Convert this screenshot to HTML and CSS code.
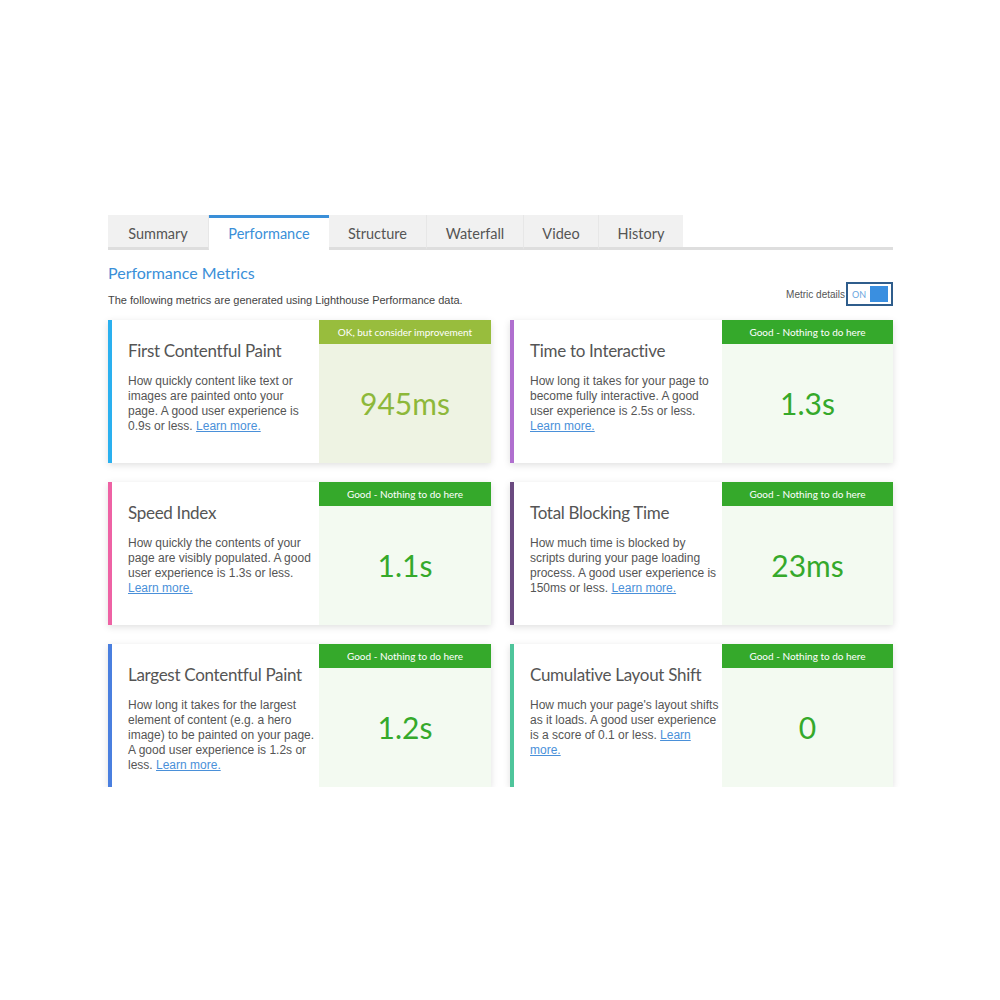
FILE: index.html
```html
<!DOCTYPE html>
<html>
<head>
<meta charset="utf-8">
<link rel="stylesheet" href="styles.css">
</head>
<body>
<div class="page">
  <nav class="tabs">
    <div class="tab t-summary">Summary</div>
    <div class="tab active t-perf">Performance</div>
    <div class="tab t-struct">Structure</div>
    <div class="tab t-water">Waterfall</div>
    <div class="tab t-video">Video</div>
    <div class="tab t-hist">History</div>
  </nav>
  <div class="head">
    <div class="head-text">
      <h2 class="heading">Performance Metrics</h2>
      <p class="sub">The following metrics are generated using Lighthouse Performance data.</p>
    </div>
    <div class="details">
      <span class="details-label">Metric details</span>
      <span class="toggle"><span class="toggle-on">ON</span><span class="toggle-knob"></span></span>
    </div>
  </div>
  <div class="grid">
    <div class="card c-fcp">
      <div class="info">
        <h3 class="title">First Contentful Paint</h3>
        <p class="desc">How quickly content like text or images are painted onto your page. A good user experience is 0.9s or less. <a href="#">Learn more.</a></p>
      </div>
      <div class="panel ok">
        <div class="badge">OK, but consider improvement</div>
        <div class="value">945ms</div>
      </div>
    </div>
    <div class="card c-tti">
      <div class="info">
        <h3 class="title">Time to Interactive</h3>
        <p class="desc">How long it takes for your page to become fully interactive. A good user experience is 2.5s or less. <a href="#">Learn more.</a></p>
      </div>
      <div class="panel good">
        <div class="badge">Good - Nothing to do here</div>
        <div class="value">1.3s</div>
      </div>
    </div>
    <div class="card c-si">
      <div class="info">
        <h3 class="title">Speed Index</h3>
        <p class="desc">How quickly the contents of your page are visibly populated. A good user experience is 1.3s or less. <a href="#">Learn more.</a></p>
      </div>
      <div class="panel good">
        <div class="badge">Good - Nothing to do here</div>
        <div class="value">1.1s</div>
      </div>
    </div>
    <div class="card c-tbt">
      <div class="info">
        <h3 class="title">Total Blocking Time</h3>
        <p class="desc">How much time is blocked by scripts during your page loading process. A good user experience is 150ms or less. <a href="#">Learn more.</a></p>
      </div>
      <div class="panel good">
        <div class="badge">Good - Nothing to do here</div>
        <div class="value">23ms</div>
      </div>
    </div>
    <div class="card c-lcp">
      <div class="info">
        <h3 class="title">Largest Contentful Paint</h3>
        <p class="desc">How long it takes for the largest element of content (e.g. a hero image) to be painted on your page. A good user experience is 1.2s or less. <a href="#">Learn more.</a></p>
      </div>
      <div class="panel good">
        <div class="badge">Good - Nothing to do here</div>
        <div class="value">1.2s</div>
      </div>
    </div>
    <div class="card c-cls">
      <div class="info">
        <h3 class="title">Cumulative Layout Shift</h3>
        <p class="desc">How much your page's layout shifts as it loads. A good user experience is a score of 0.1 or less. <a href="#">Learn more.</a></p>
      </div>
      <div class="panel good">
        <div class="badge">Good - Nothing to do here</div>
        <div class="value">0</div>
      </div>
    </div>
  </div>
</div>
</body>
</html>
```

FILE: styles.css
```css
html, body {
  margin: 0;
  padding: 0;
  background: #ffffff;
}
body {
  font-family: Lato, "Open Sans", "Liberation Sans", sans-serif;
  color: #555;
}
.page {
  width: 785px;
  margin: 0 0 0 108px;
  padding-top: 215px;
}
.tabs {
  display: flex;
  height: 35px;
  border-bottom: 3px solid #dedede;
  box-sizing: border-box;
}
.tab {
  box-sizing: border-box;
  height: 35px;
  margin-bottom: -3px;
  padding-top: 10px;
  background: #f1f1f1;
  border-bottom: 3px solid #dedede;
  border-right: 1px solid #e7e7e7;
  text-align: center;
  font-size: 14.5px;
  color: #555;
}
.t-summary { width: 101px; }
.t-perf { width: 120px; }
.t-struct { width: 98px; }
.t-water { width: 97px; }
.t-video { width: 75px; }
.t-hist { width: 84px; border-right: none; }
.tab.active {
  background: #ffffff;
  color: #3a8fd8;
  border-top: 3px solid #3a8fd8;
  border-bottom: 3px solid #ffffff;
  padding-top: 7px;
  height: 38px;
  border-right: none;
}
.head {
  display: flex;
  justify-content: space-between;
  align-items: flex-end;
  padding-bottom: 13px;
}
.heading {
  margin: 12px 0 0 0;
  font-size: 16px;
  font-weight: 400;
  color: #3a8fd8;
  line-height: 22px;
}
.sub {
  margin: 10px 0 0 0;
  font-family: "Liberation Sans", Arial, sans-serif;
  font-size: 11px;
  line-height: 13px;
  color: #444;
}
.details {
  display: flex;
  align-items: center;
  margin-bottom: 1px;
}
.details-label {
  font-family: "Liberation Sans", Arial, sans-serif;
  font-size: 10px;
  color: #555;
  margin-right: 1px;
}
.toggle {
  box-sizing: border-box;
  width: 47px;
  height: 24px;
  border: 2px solid #2f5d8c;
  display: flex;
  align-items: center;
  padding: 0 3px 0 4px;
  justify-content: space-between;
}
.toggle-on {
  font-size: 9px;
  color: #6aa5de;
}
.toggle-knob {
  width: 18px;
  height: 16px;
  background: #3a8fe0;
}
.grid {
  display: grid;
  grid-template-columns: 383px 383px;
  column-gap: 19px;
  row-gap: 19px;
}
.card {
  display: flex;
  height: 143px;
  box-sizing: border-box;
  border-left: 4px solid #2ab0ef;
  background: #fff;
  box-shadow: 0 2px 7px rgba(0, 0, 0, 0.13);
}
.c-fcp { border-left-color: #2ab0ef; }
.c-tti { border-left-color: #b06fcf; }
.c-si { border-left-color: #ee62a4; }
.c-tbt { border-left-color: #6b4a80; }
.c-lcp { border-left-color: #4a7fdf; }
.c-cls { border-left-color: #4fc59b; }
.info {
  flex: 1;
  min-width: 0;
  padding: 19px 3.5px 0 16px;
}
.title {
  margin: 0;
  font-size: 17px;
  letter-spacing: -0.3px;
  white-space: nowrap;
  font-weight: 400;
  color: #555;
  line-height: 24px;
}
.desc {
  margin: 11px 0 0 0;
  font-family: "Liberation Sans", Arial, sans-serif;
  font-size: 12px;
  line-height: 15px;
  color: #555;
}
.desc a {
  color: #4a90d9;
  text-decoration: underline;
}
.panel {
  width: 172px;
  flex-shrink: 0;
  display: flex;
  flex-direction: column;
}
.card:nth-child(even) .panel { width: 171px; }
.panel.good { background: #f3faf1; }
.panel.ok { background: #eef3e3; }
.badge {
  height: 24px;
  line-height: 24px;
  text-align: center;
  font-size: 10px;
  color: #fff;
}
.good .badge { background: #35a92b; }
.ok .badge { background: #98bd3d; }
.value {
  flex: 1;
  display: flex;
  align-items: center;
  justify-content: center;
  font-size: 30px;
  padding-bottom: 1px;
}
.good .value { color: #35a92b; }
.ok .value { color: #8db83a; }
```
